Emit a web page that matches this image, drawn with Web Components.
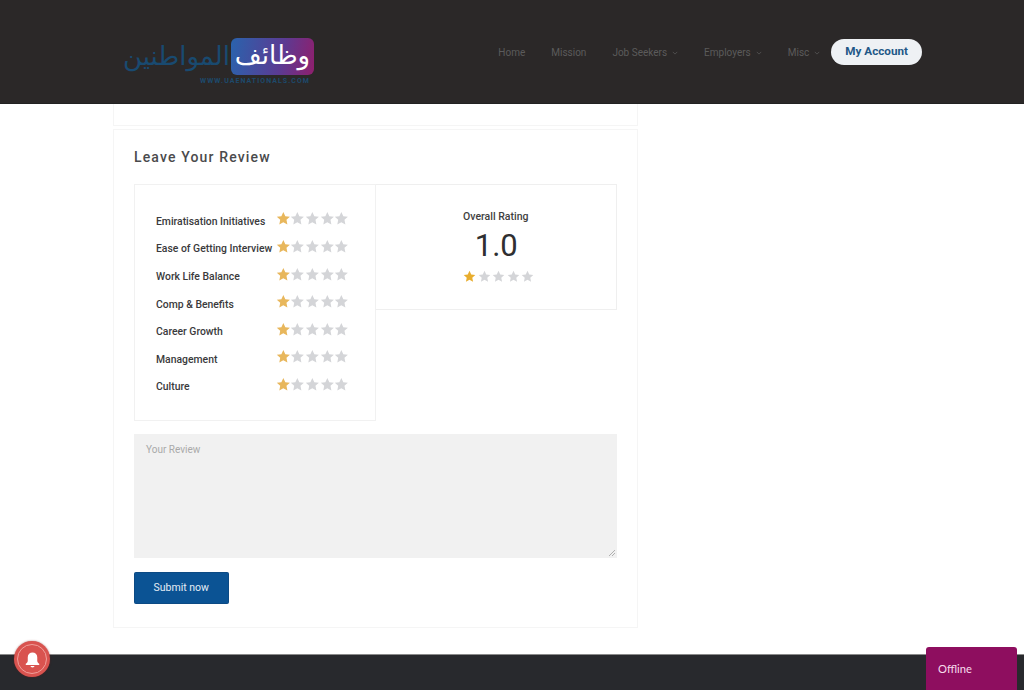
<!DOCTYPE html>
<html lang="en">
<head>
<meta charset="utf-8">
<title>Leave Your Review</title>
<style>
  html, body { margin: 0; padding: 0; height: 690px; overflow: hidden; background: #fff; font-family: Roboto, "Liberation Sans", sans-serif; }
</style>
</head>
<body>
<site-header></site-header>
<review-page>
  <review-form></review-form>
</review-page>
<site-footer></site-footer>
<bell-button></bell-button>
<offline-tab>Offline</offline-tab>

<script>
const STAR = 'M12 1.6l3.2 6.9 7.5.9-5.6 5.1 1.5 7.4L12 18.2l-6.6 3.7 1.5-7.4L1.3 9.4l7.5-.9z';

class StarRating extends HTMLElement {
  constructor() {
    super();
    this.shadowDOM = this.attachShadow({ mode: 'open' });
  }

  connectedCallback() {
    const size = this.getAttribute('size') || 15;
    const gap = this.getAttribute('gap') || 0;
    const on = this.getAttribute('color') || '#e8b75c';
    const value = Number(this.getAttribute('value') || 0);
    let stars = '';
    for (let i = 0; i < 5; i++) {
      stars += `<svg viewBox="0 0 24 24" width="${size}" height="${size}"><path fill="${i < value ? on : '#d4d5d8'}" d="${STAR}"/></svg>`;
    }
    this.shadowDOM.innerHTML = `
      <style>
        :host { display: inline-flex; gap: ${gap}px; }
        svg { display: block; }
      </style>
      ${stars}
    `;
  }
}

class NavLink extends HTMLElement {
  constructor() {
    super();
    this.shadowDOM = this.attachShadow({ mode: 'open' });
  }

  connectedCallback() {
    const caret = this.hasAttribute('caret')
      ? '<svg viewBox="0 0 8 8" width="6" height="6"><path d="M1 2.5l3 3 3-3" fill="none" stroke="#555" stroke-width="1.1"/></svg>'
      : '';
    this.shadowDOM.innerHTML = `
      <style>
        :host { display: inline-flex; align-items: center; gap: 5px; font-size: 10px; color: #5b5b5b; padding-top: 2px; }
      </style>
      <slot></slot>${caret}
    `;
  }
}

class SiteHeader extends HTMLElement {
  constructor() {
    super();
    this.shadowDOM = this.attachShadow({ mode: 'open' });
  }

  connectedCallback() {
    this.shadowDOM.innerHTML = `
      <style>
        :host {
          display: flex;
          justify-content: space-between;
          align-items: flex-start;
          height: 104px;
          box-sizing: border-box;
          padding: 38px 102px 0 122px;
          background: #2b2828;
          border-bottom: 1px solid #222;
        }
        .logo { display: flex; flex-direction: column; align-items: flex-end; width: 192px; }
        .logo-top { display: flex; align-items: center; height: 37px; direction: rtl; }
        .badge {
          box-sizing: border-box;
          width: 83px;
          height: 37px;
          border-radius: 6px;
          background: linear-gradient(100deg, #2a63ad 0%, #5b3b93 60%, #8f1f6d 100%);
          color: #fff;
          font: 400 26px/35px "DejaVu Sans", sans-serif;
          text-align: center;
          overflow: hidden;
        }
        .ar {
          width: 109px;
          color: #194a70;
          font: 400 26px/37px "DejaVu Sans", sans-serif;
          white-space: nowrap;
          text-align: center;
          overflow: hidden;
        }
        .site {
          margin-top: 2px;
          padding-right: 4px;
          color: #1d4a6c;
          font: 700 7px/9px Roboto, sans-serif;
          letter-spacing: 1.05px;
        }
        nav { display: flex; align-items: center; gap: 26px; height: 27px; }
        .account {
          display: inline-block;
          margin-left: -15px;
          padding: 0 14px;
          height: 26px;
          line-height: 25px;
          border-radius: 13px;
          background: #eef1f4;
          color: #1f5887;
          font-size: 11.7px;
          font-weight: 700;
        }
      </style>
      <div class="logo">
        <div class="logo-top">
          <div class="badge">وظائف</div>
          <div class="ar">المواطنين</div>
        </div>
        <div class="site">WWW.UAENATIONALS.COM</div>
      </div>
      <nav>
        <nav-link>Home</nav-link>
        <nav-link>Mission</nav-link>
        <nav-link caret>Job Seekers</nav-link>
        <nav-link caret>Employers</nav-link>
        <nav-link caret>Misc</nav-link>
        <span class="account">My Account</span>
      </nav>
    `;
  }
}

class ReviewPage extends HTMLElement {
  constructor() {
    super();
    this.shadowDOM = this.attachShadow({ mode: 'open' });
  }

  connectedCallback() {
    this.shadowDOM.innerHTML = `
      <style>
        :host { display: block; height: 550px; padding-left: 113px; }
        .stub {
          box-sizing: border-box;
          width: 525px;
          height: 22px;
          border: 1px solid #f5f5f5;
          border-top: 0;
          margin-bottom: 3px;
        }
      </style>
      <div class="stub"></div>
      <slot></slot>
    `;
  }
}

class RatingRow extends HTMLElement {
  constructor() {
    super();
    this.shadowDOM = this.attachShadow({ mode: 'open' });
  }

  connectedCallback() {
    this.shadowDOM.innerHTML = `
      <style>
        :host {
          display: flex;
          align-items: center;
          height: 27.6px;
          font-size: 10.4px;
          font-weight: 500;
          color: #3a3a3c;
        }
        .label { width: 119.5px; flex: none; white-space: nowrap; padding-top: 3px; }
        star-rating { margin-top: -2px; }
      </style>
      <span class="label"><slot></slot></span>
      <star-rating value="1" size="14.7" gap="0"></star-rating>
    `;
  }
}

class OverallRating extends HTMLElement {
  constructor() {
    super();
    this.shadowDOM = this.attachShadow({ mode: 'open' });
  }

  connectedCallback() {
    this.shadowDOM.innerHTML = `
      <style>
        :host {
          display: flex;
          flex-direction: column;
          align-items: center;
          box-sizing: border-box;
          width: 242px;
          height: 126px;
          padding-top: 26px;
          border: 1px solid #efefef;
          border-left: 0;
          color: #333;
        }
        .title { font-size: 10.5px; font-weight: 500; line-height: 12px; color: #3f3f41; }
        .value { font-size: 31px; line-height: 36px; margin: 5px 0 0 1px; color: #2f2f31; }
        star-rating { margin: 6px 0 0 6px; }
      </style>
      <div class="title">Overall Rating</div>
      <div class="value">1.0</div>
      <star-rating value="1" size="13" gap="1.6" color="#e8ad2e"></star-rating>
    `;
  }
}

class ReviewForm extends HTMLElement {
  constructor() {
    super();
    this.shadowDOM = this.attachShadow({ mode: 'open' });
  }

  connectedCallback() {
    const rows = ['Emiratisation Initiatives', 'Ease of Getting Interview', 'Work Life Balance', 'Comp & Benefits', 'Career Growth', 'Management', 'Culture'];
    this.shadowDOM.innerHTML = `
      <style>
        :host {
          display: block;
          box-sizing: border-box;
          width: 525px;
          height: 499px;
          padding: 19px 20px 0;
          border: 1px solid #f5f5f5;
        }
        h3 {
          margin: 0 0 19px;
          font-size: 14px;
          line-height: 16px;
          font-weight: 500;
          letter-spacing: 1.15px;
          color: #4a4a4c;
        }
        .ratings { display: flex; align-items: flex-start; height: 237px; }
        .list {
          box-sizing: border-box;
          width: 242px;
          height: 237px;
          padding: 21px 0 0 21px;
          border: 1px solid #f1f1f1;
        }
        .review {
          position: relative;
          box-sizing: border-box;
          height: 124px;
          margin-top: 13px;
          padding: 10px 12px;
          background: #f1f1f1;
          color: #a9a9a9;
          font-size: 10px;
          line-height: 12px;
        }
        .grip { position: absolute; right: 1px; bottom: 1px; display: block; }
        .submit {
          display: block;
          box-sizing: border-box;
          width: 94.5px;
          height: 31.5px;
          margin-top: 14px;
          border: 1px solid #0c4a84;
          border-radius: 1.5px;
          background: #0b5394;
          color: #e4edf5;
          font: 400 10.5px/29px Roboto, sans-serif;
          text-align: center;
          padding: 0;
        }
      </style>
      <h3>Leave Your Review</h3>
      <div class="ratings">
        <div class="list">
          ${rows.map((r) => `<rating-row>${r.replace('&', '&amp;')}</rating-row>`).join('')}
        </div>
        <overall-rating></overall-rating>
      </div>
      <div class="review">
        Your Review
        <svg class="grip" viewBox="0 0 8 8" width="8" height="8"><path d="M7 1L1 7M7 4L4 7" stroke="#b0b0b0" stroke-width="1" fill="none"/></svg>
      </div>
      <button class="submit" type="button">Submit now</button>
    `;
  }
}

class SiteFooter extends HTMLElement {
  constructor() {
    super();
    this.shadowDOM = this.attachShadow({ mode: 'open' });
  }

  connectedCallback() {
    this.shadowDOM.innerHTML = `
      <style>
        :host { display: block; height: 36px; background: #28292d; border-top: 1px solid #8a8a8a; box-sizing: border-box; }
      </style>
    `;
  }
}

class BellButton extends HTMLElement {
  constructor() {
    super();
    this.shadowDOM = this.attachShadow({ mode: 'open' });
  }

  connectedCallback() {
    this.shadowDOM.innerHTML = `
      <style>
        :host {
          position: fixed;
          left: 14px;
          top: 641px;
          width: 36px;
          height: 36px;
          box-sizing: border-box;
          display: flex;
          align-items: center;
          justify-content: center;
          border-radius: 50%;
          background: #d9534f;
          box-shadow: 0 0 2px rgba(120, 30, 30, .6);
        }
        .ring {
          box-sizing: border-box;
          width: 30px;
          height: 30px;
          display: flex;
          align-items: center;
          justify-content: center;
          border: 1.5px solid #f0a09b;
          border-radius: 50%;
        }
      </style>
      <span class="ring">
        <svg viewBox="0 0 24 24" width="19" height="19"><path fill="#fff" d="M12 3a6 6 0 0 0-6 6v4.5c0 1.8-1.2 3-2.5 4V19h17v-1.5c-1.3-1-2.5-2.2-2.5-4V9a6 6 0 0 0-6-6z"/><path fill="#fff" d="M9.5 20.2h5a2.5 1.8 0 0 1-5 0z"/></svg>
      </span>
    `;
  }
}

class OfflineTab extends HTMLElement {
  constructor() {
    super();
    this.shadowDOM = this.attachShadow({ mode: 'open' });
  }

  connectedCallback() {
    this.shadowDOM.innerHTML = `
      <style>
        :host {
          position: fixed;
          left: 926px;
          top: 647px;
          width: 91px;
          height: 43px;
          box-sizing: border-box;
          padding: 15px 0 0 12px;
          background: #8e0e5f;
          border-radius: 3px 3px 0 0;
          color: #f7dcec;
          font: 400 11.2px/14px Lato, "Open Sans", sans-serif;
        }
      </style>
      <slot></slot>
    `;
  }
}

customElements.define('star-rating', StarRating);
customElements.define('nav-link', NavLink);
customElements.define('site-header', SiteHeader);
customElements.define('review-page', ReviewPage);
customElements.define('rating-row', RatingRow);
customElements.define('overall-rating', OverallRating);
customElements.define('review-form', ReviewForm);
customElements.define('site-footer', SiteFooter);
customElements.define('bell-button', BellButton);
customElements.define('offline-tab', OfflineTab);
</script>
</body>
</html>
